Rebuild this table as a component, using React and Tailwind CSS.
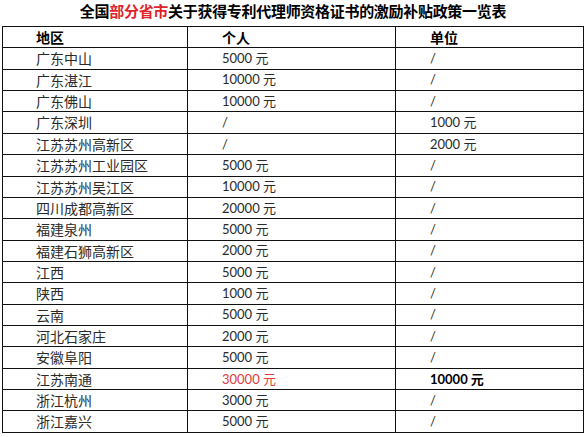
const rows = [
  ['广东中山', '5000 元', '/'],
  ['广东湛江', '10000 元', '/'],
  ['广东佛山', '10000 元', '/'],
  ['广东深圳', '/', '1000 元'],
  ['江苏苏州高新区', '/', '2000 元'],
  ['江苏苏州工业园区', '5000 元', '/'],
  ['江苏苏州吴江区', '10000 元', '/'],
  ['四川成都高新区', '20000 元', '/'],
  ['福建泉州', '5000 元', '/'],
  ['福建石狮高新区', '2000 元', '/'],
  ['江西', '5000 元', '/'],
  ['陕西', '1000 元', '/'],
  ['云南', '5000 元', '/'],
  ['河北石家庄', '2000 元', '/'],
  ['安徽阜阳', '5000 元', '/'],
  ['江苏南通', '30000 元', '10000 元', true],
  ['浙江杭州', '3000 元', '/'],
  ['浙江嘉兴', '5000 元', '/'],
];

const font = { fontFamily: 'Lato, "Noto Sans CJK SC", sans-serif' };

function Row({ cells, header, special }) {
  return (
    <div className="grid h-[21.37px] grid-cols-[185px_208px_188px] border-b border-[#111]">
      <div className={`flex items-center border-r border-[#111] pl-[33px] text-[14px] ${header ? 'font-bold text-black' : ''}`}>
        {cells[0]}
      </div>
      <div
        className={`flex items-center border-r border-[#111] pl-[34px] ${header ? 'text-[14px] font-bold text-black' : ''} ${special ? 'text-[#e33b3b]' : ''}`}
      >
        {cells[1]}
      </div>
      <div className={`flex items-center pl-[34px] ${header || special ? 'font-bold text-black' : ''} ${header ? 'text-[14px]' : ''}`}>
        {cells[2]}
      </div>
    </div>
  );
}

export default function App() {
  return (
    <div className="h-[437px] w-[586px] bg-white text-[13px] text-[#2a2a2a]" style={font}>
      <div className="flex h-[26px] items-center justify-center pb-[3px] text-[15px] font-bold tracking-[-0.3px] text-black">
        全国<span className="text-[#e0242b]">部分省市</span>关于获得专利代理师资格证书的激励补贴政策一览表
      </div>
      <div className="ml-[2px] w-[582px] border-l border-t border-r border-[#111]">
        <Row cells={['地区', '个人', '单位']} header />
        {rows.map((r) => (
          <Row key={r[0]} cells={r} special={r[3]} />
        ))}
      </div>
    </div>
  );
}
